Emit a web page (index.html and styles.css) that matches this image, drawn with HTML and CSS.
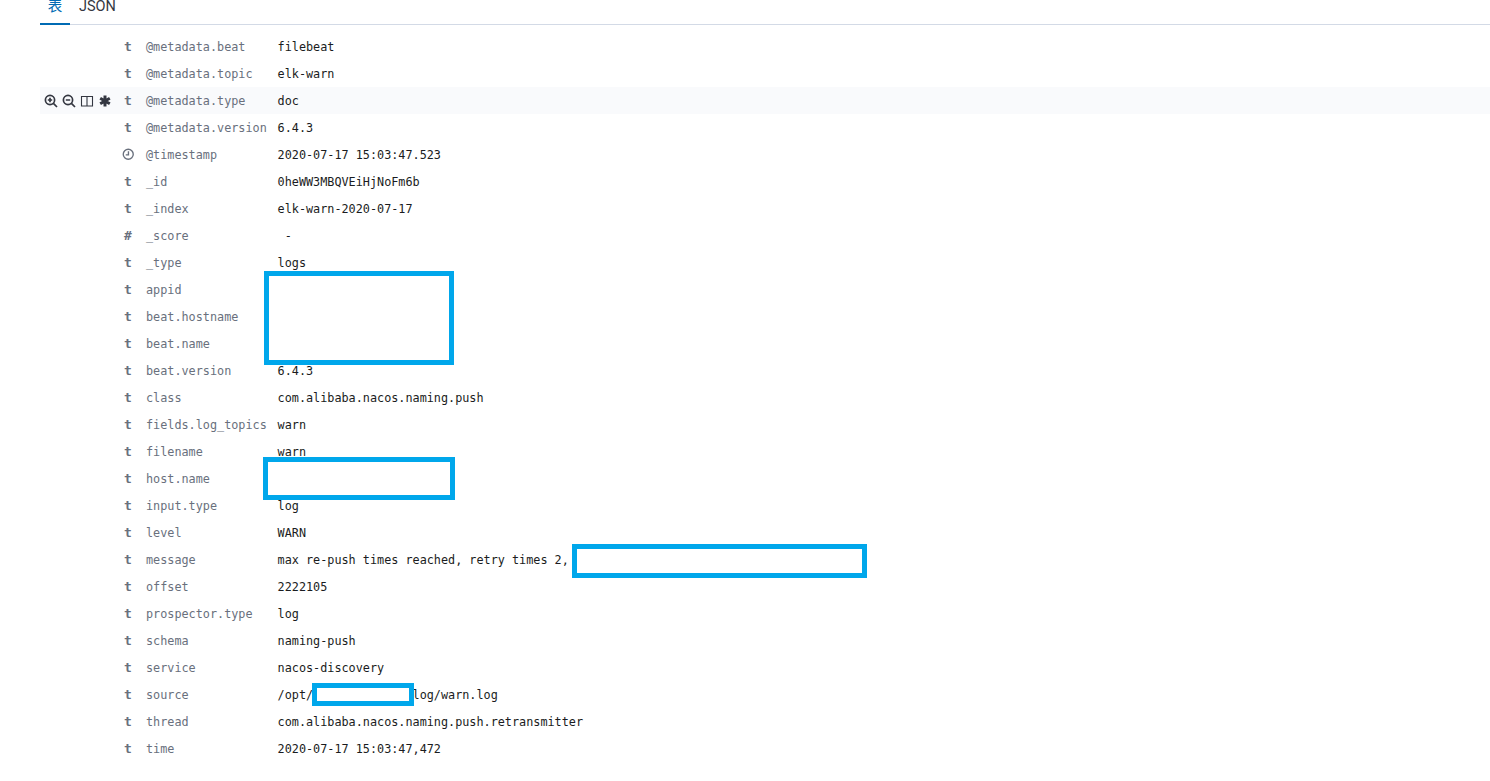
FILE: index.html
```html
<!DOCTYPE html>
<html lang="zh">
<head>
<meta charset="utf-8">
<title>Document</title>
<link rel="stylesheet" href="styles.css">
</head>
<body>
<div class="doc">
  <nav class="tabs">
    <a class="tab active">表</a>
    <a class="tab">JSON</a>
  </nav>
  <table class="fields">
    <tbody>
      <tr><td class="actions"></td><td class="type">t</td><td class="name">@metadata.beat</td><td class="value">filebeat</td></tr>
      <tr><td class="actions"></td><td class="type">t</td><td class="name">@metadata.topic</td><td class="value">elk-warn</td></tr>
      <tr class="hover"><td class="actions"><div class="icons">
        <svg viewBox="0 0 14 14"><circle cx="6" cy="6" r="4.6"/><path d="M9.4 9.4 13 13M3.8 6h4.4M6 3.8v4.4"/></svg>
        <svg viewBox="0 0 14 14"><circle cx="6" cy="6" r="4.6"/><path d="M9.4 9.4 13 13M3.8 6h4.4"/></svg>
        <svg class="thin" viewBox="0 0 14 14"><path d="M1.5 2.5h11v9.5h-11zM7 2.5v9.5"/></svg>
        <svg class="bold" viewBox="0 0 14 14"><path d="M7 1.5v11M2.2 4.2l9.6 5.6M11.8 4.2 2.2 9.8"/></svg>
      </div></td><td class="type">t</td><td class="name">@metadata.type</td><td class="value">doc</td></tr>
      <tr><td class="actions"></td><td class="type">t</td><td class="name">@metadata.version</td><td class="value">6.4.3</td></tr>
      <tr><td class="actions"></td><td class="type"><svg class="clock" viewBox="0 0 12 12"><circle cx="6" cy="6" r="4.8"/><path d="M6.2 3.2V6.6H3.6"/></svg></td><td class="name">@timestamp</td><td class="value">2020-07-17 15:03:47.523</td></tr>
      <tr><td class="actions"></td><td class="type">t</td><td class="name">_id</td><td class="value">0heWW3MBQVEiHjNoFm6b</td></tr>
      <tr><td class="actions"></td><td class="type">t</td><td class="name">_index</td><td class="value">elk-warn-2020-07-17</td></tr>
      <tr><td class="actions"></td><td class="type">#</td><td class="name">_score</td><td class="value"> -</td></tr>
      <tr><td class="actions"></td><td class="type">t</td><td class="name">_type</td><td class="value">logs</td></tr>
      <tr><td class="actions"></td><td class="type">t</td><td class="name">appid</td><td class="value"></td></tr>
      <tr><td class="actions"></td><td class="type">t</td><td class="name">beat.hostname</td><td class="value"></td></tr>
      <tr><td class="actions"></td><td class="type">t</td><td class="name">beat.name</td><td class="value"></td></tr>
      <tr><td class="actions"></td><td class="type">t</td><td class="name">beat.version</td><td class="value">6.4.3</td></tr>
      <tr><td class="actions"></td><td class="type">t</td><td class="name">class</td><td class="value">com.alibaba.nacos.naming.push</td></tr>
      <tr><td class="actions"></td><td class="type">t</td><td class="name">fields.log_topics</td><td class="value">warn</td></tr>
      <tr><td class="actions"></td><td class="type">t</td><td class="name">filename</td><td class="value">warn</td></tr>
      <tr><td class="actions"></td><td class="type">t</td><td class="name">host.name</td><td class="value"></td></tr>
      <tr><td class="actions"></td><td class="type">t</td><td class="name">input.type</td><td class="value">log</td></tr>
      <tr><td class="actions"></td><td class="type">t</td><td class="name">level</td><td class="value">WARN</td></tr>
      <tr><td class="actions"></td><td class="type">t</td><td class="name">message</td><td class="value">max re-push times reached, retry times 2,</td></tr>
      <tr><td class="actions"></td><td class="type">t</td><td class="name">offset</td><td class="value">2222105</td></tr>
      <tr><td class="actions"></td><td class="type">t</td><td class="name">prospector.type</td><td class="value">log</td></tr>
      <tr><td class="actions"></td><td class="type">t</td><td class="name">schema</td><td class="value">naming-push</td></tr>
      <tr><td class="actions"></td><td class="type">t</td><td class="name">service</td><td class="value">nacos-discovery</td></tr>
      <tr><td class="actions"></td><td class="type">t</td><td class="name">source</td><td class="value">/opt/              log/warn.log</td></tr>
      <tr><td class="actions"></td><td class="type">t</td><td class="name">thread</td><td class="value">com.alibaba.nacos.naming.push.retransmitter</td></tr>
      <tr><td class="actions"></td><td class="type">t</td><td class="name">time</td><td class="value">2020-07-17 15:03:47,472</td></tr>
    </tbody>
  </table>
</div>
<div class="mask mask-a"></div>
<div class="mask mask-b"></div>
<div class="mask mask-c"></div>
<div class="mask mask-d"></div>
</body>
</html>
```

FILE: styles.css
```css
html, body { margin: 0; padding: 0; background: #fff; overflow: hidden; height: 781px; }
body { position: relative; font-family: Roboto, "Noto Sans CJK SC", sans-serif; }
.doc { padding: 0 0 0 40px; }
.tabs { display: flex; height: 25px; border-bottom: 1px solid #d3dae6; box-sizing: border-box; }
.tab { width: 30px; height: 25px; box-sizing: border-box; text-align: center; font-size: 14.5px; line-height: 13px; color: #343741; }
.tab.active { color: #006bb4; border-bottom: 2px solid #006bb4; }
.tab + .tab { width: auto; margin-left: 9px; }
.fields { border-collapse: collapse; width: 1450px; margin-top: 8px; font-family: "DejaVu Sans Mono", monospace; font-size: 11.8px; table-layout: fixed; }
.fields td { height: 27px; padding: 0; vertical-align: middle; white-space: pre; }
.hover { background: #f9fafc; }
.actions { width: 76px; }
.type { width: 30px; font-weight: bold; color: #69707d; font-size: 13px; padding-left: 8px !important; box-sizing: border-box; }
.name { width: 131.6px; color: #69707d; }
.value { width: auto; color: #1a1c21; }
.icons { display: flex; gap: 4px; padding-left: 4px; }
.icons svg { width: 14px; height: 14px; fill: none; stroke: #343741; stroke-width: 1.7; }
.icons .thin { stroke-width: 1.1; }
.icons .bold { stroke-width: 3; }
.clock { width: 12.5px; height: 12.5px; margin-left: -2.5px; fill: none; stroke: #69707d; stroke-width: 1.3; display: block; }
.mask { position: absolute; background: #fff; border: 5px solid #00a7eb; box-sizing: border-box; }
.mask-a { left: 264px; top: 271px; width: 190px; height: 94px; }
.mask-b { left: 263px; top: 457px; width: 192px; height: 43px; }
.mask-c { left: 572px; top: 544px; width: 295px; height: 34px; }
.mask-d { left: 312px; top: 683px; width: 102px; height: 23px; }
```
